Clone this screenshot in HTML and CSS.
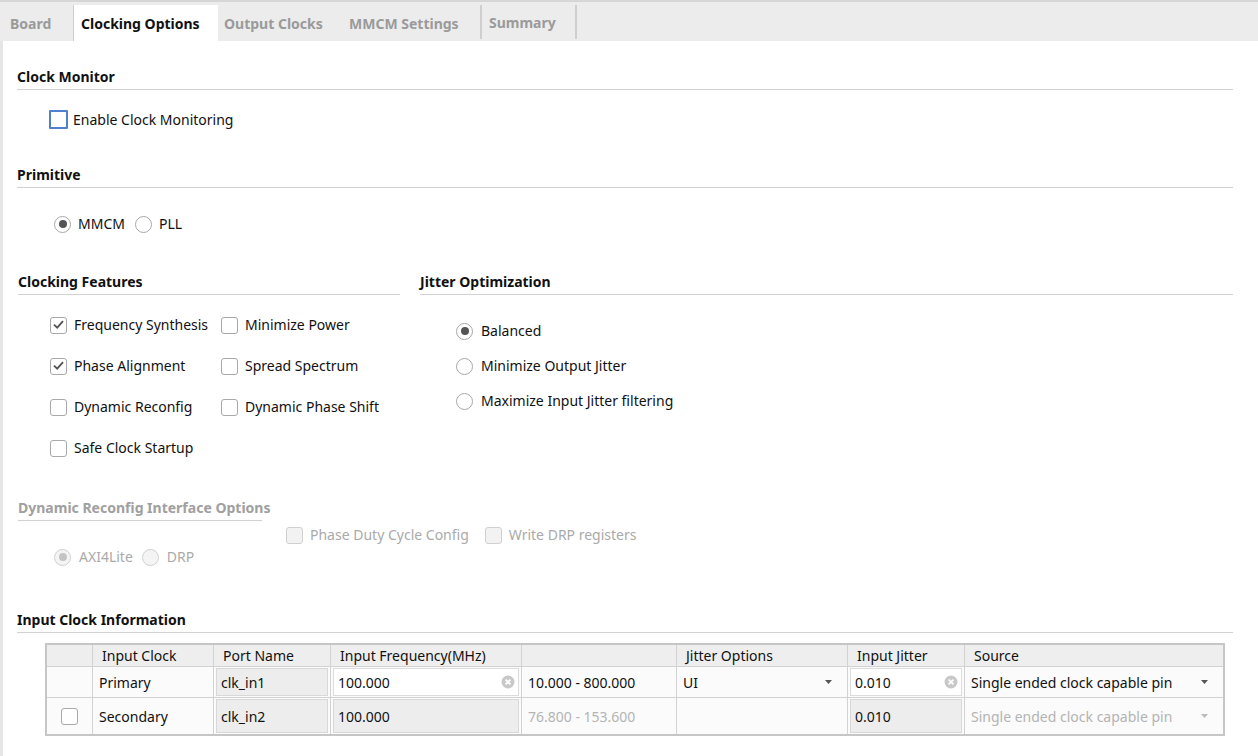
FILE: index.html
```html
<!DOCTYPE html>
<html>
<head>
<meta charset="utf-8">
<link rel="stylesheet" href="styles.css">
</head>
<body>
<div class="app">
  <div class="tabbar">
    <div class="tab tab-board">Board</div>
    <div class="tab tab-active">Clocking Options</div>
    <div class="tab tab-output">Output Clocks</div>
    <div class="tab tab-mmcm">MMCM Settings</div>
    <div class="tab tab-summary">Summary</div>
  </div>
  <div class="content">
    <div class="section-title mt-cm">Clock Monitor</div>
    <div class="opt enable-row"><span class="cb cb-focus"></span><span>Enable Clock Monitoring</span></div>

    <div class="section-title mt-prim">Primitive</div>
    <div class="radio-row prim-row">
      <div class="opt"><span class="rb rb-on"></span><span>MMCM</span></div>
      <div class="opt"><span class="rb"></span><span>PLL</span></div>
    </div>

    <div class="two-col">
      <div class="col-left">
        <div class="section-title">Clocking Features</div>
        <div class="feat-grid">
          <div class="opt"><span class="cb cb-checked"><svg viewBox="0 0 17 17" width="17" height="17"><path d="M4 8.6 L7.2 11.6 L13 5.2" fill="none" stroke="#555" stroke-width="1.9"/></svg></span><span>Frequency Synthesis</span></div>
          <div class="opt"><span class="cb"></span><span>Minimize Power</span></div>
          <div class="opt"><span class="cb cb-checked"><svg viewBox="0 0 17 17" width="17" height="17"><path d="M4 8.6 L7.2 11.6 L13 5.2" fill="none" stroke="#555" stroke-width="1.9"/></svg></span><span>Phase Alignment</span></div>
          <div class="opt"><span class="cb"></span><span>Spread Spectrum</span></div>
          <div class="opt"><span class="cb"></span><span>Dynamic Reconfig</span></div>
          <div class="opt"><span class="cb"></span><span>Dynamic Phase Shift</span></div>
          <div class="opt"><span class="cb"></span><span>Safe Clock Startup</span></div>
        </div>
      </div>
      <div class="col-right">
        <div class="section-title">Jitter Optimization</div>
        <div class="jitter-list">
          <div class="opt"><span class="rb rb-on"></span><span>Balanced</span></div>
          <div class="opt"><span class="rb"></span><span>Minimize Output Jitter</span></div>
          <div class="opt"><span class="rb"></span><span>Maximize Input Jitter filtering</span></div>
        </div>
      </div>
    </div>

    <div class="drp-row">
      <div class="drp-left">
        <div class="section-title disabled-title">Dynamic Reconfig Interface Options</div>
        <div class="radio-row drp-radios">
          <div class="opt dis"><span class="rb rb-on rb-dis"></span><span>AXI4Lite</span></div>
          <div class="opt dis"><span class="rb rb-dis"></span><span>DRP</span></div>
        </div>
      </div>
      <div class="drp-right">
        <div class="opt dis"><span class="cb cb-dis"></span><span>Phase Duty Cycle Config</span></div>
        <div class="opt dis"><span class="cb cb-dis"></span><span>Write DRP registers</span></div>
      </div>
    </div>

    <div class="section-title mt-ici">Input Clock Information</div>
    <div class="clk-table">
      <div class="c h"></div>
      <div class="c h">Input Clock</div>
      <div class="c h">Port Name</div>
      <div class="c h">Input Frequency(MHz)</div>
      <div class="c h"></div>
      <div class="c h">Jitter Options</div>
      <div class="c h">Input Jitter</div>
      <div class="c h last">Source</div>

      <div class="c r1"></div>
      <div class="c r1 txt">Primary</div>
      <div class="c r1 fc"><div class="field ro">clk_in1</div></div>
      <div class="c r1 fc"><div class="field wr"><span>100.000</span><svg class="clr" viewBox="0 0 14 14" width="14" height="14"><circle cx="7" cy="7" r="6.5" fill="#c8c8c8"/><path d="M4.6 4.6 L9.4 9.4 M9.4 4.6 L4.6 9.4" stroke="#fff" stroke-width="1.8"/></svg></div></div>
      <div class="c r1 txt">10.000 - 800.000</div>
      <div class="c r1 txt sel"><span>UI</span><svg class="arr" viewBox="0 0 7 4" width="7" height="4"><path d="M0 0 L7 0 L3.5 4 Z" fill="#555"/></svg></div>
      <div class="c r1 fc"><div class="field wr"><span>0.010</span><svg class="clr" viewBox="0 0 14 14" width="14" height="14"><circle cx="7" cy="7" r="6.5" fill="#c8c8c8"/><path d="M4.6 4.6 L9.4 9.4 M9.4 4.6 L4.6 9.4" stroke="#fff" stroke-width="1.8"/></svg></div></div>
      <div class="c r1 txt sel last"><span>Single ended clock capable pin</span><svg class="arr" viewBox="0 0 7 4" width="7" height="4"><path d="M0 0 L7 0 L3.5 4 Z" fill="#555"/></svg></div>

      <div class="c r2 cbcell"><span class="cb"></span></div>
      <div class="c r2 txt">Secondary</div>
      <div class="c r2 fc"><div class="field ro">clk_in2</div></div>
      <div class="c r2 fc"><div class="field ro">100.000</div></div>
      <div class="c r2 txt dim">76.800 - 153.600</div>
      <div class="c r2"></div>
      <div class="c r2 fc"><div class="field ro">0.010</div></div>
      <div class="c r2 txt sel dim last"><span>Single ended clock capable pin</span><svg class="arr" viewBox="0 0 7 4" width="7" height="4"><path d="M0 0 L7 0 L3.5 4 Z" fill="#bbb"/></svg></div>
    </div>
  </div>
</div>
</body>
</html>
```

FILE: styles.css
```css
* { box-sizing: border-box; }
html, body { margin: 0; padding: 0; background: #fff; }
body {
  font-family: "Noto Sans", "Open Sans", "DejaVu Sans", sans-serif;
  font-size: 14px;
  color: #111;
  width: 1258px;
  height: 756px;
  overflow: hidden;
}
.app { height: 756px; display: flex; flex-direction: column; }

/* tabs */
.tabbar {
  height: 41px;
  background: #ececec;
  border-top: 2px solid #d6d6d6;
  display: flex;
  align-items: flex-end;
}
.tab {
  height: 36px;
  display: flex;
  align-items: center;
  font-weight: bold;
  color: #9a9a9a;
  font-size: 14px;
  white-space: nowrap;
}
.tab-board { width: 73px; padding-left: 10px; }
.tab-active { width: 145px; padding-left: 7px; background: #fff; color: #111; border-left: 1px solid #cfcfcf; }
.tab-output { width: 125px; padding-left: 6px; }
.tab-mmcm { width: 137px; padding-left: 6px; }
.tab-summary {
  width: 97px; padding-left: 7px; padding-top: 1px;
  height: 34px; align-self: flex-start; margin-top: 3px;
  border-left: 2px solid #cfcfcf; border-right: 2px solid #cfcfcf;
}

/* content */
.content {
  flex: 1;
  border-left: 3px solid #e6e6e6;
  padding: 0 25px 0 14px;
  display: flex;
  flex-direction: column;
}
.section-title {
  font-weight: bold;
  line-height: 18px;
  padding-bottom: 3px;
  border-bottom: 1px solid #d2d2d2;
  white-space: nowrap;
}
.mt-cm { margin-top: 27px; }
.mt-prim { margin-top: 37px; }
.mt-ici { margin-top: 45px; }

.opt {
  display: flex;
  align-items: center;
  gap: 7px;
  line-height: 18px;
  height: 18px;
  white-space: nowrap;
}
.dis { color: #aaa; }

.cb {
  width: 17px; height: 17px;
  border: 1.5px solid #a8a8a8;
  border-radius: 3px;
  background: #fff;
  flex: none;
  display: flex;
  align-items: center;
  justify-content: center;
  position: relative;
}
.cb svg { position: absolute; left: -1.5px; top: -1.5px; }
.cb-focus { width: 19px; height: 19px; border: 2px solid #4f7fcf; border-radius: 1px; }
.cb-dis { border-color: #d0d0d0; background: #f2f2f2; }

.rb {
  width: 17px; height: 17px;
  border: 1.5px solid #a8a8a8;
  border-radius: 50%;
  background: #fff;
  flex: none;
  display: flex;
  align-items: center;
  justify-content: center;
}
.rb-on::after {
  content: "";
  width: 8px; height: 8px;
  border-radius: 50%;
  background: #555;
}
.rb-dis { border-color: #d0d0d0; background: #f4f4f4; }
.rb-dis.rb-on::after { background: #c4c4c4; }

.enable-row { margin-top: 20px; margin-left: 32px; gap: 5px; height: 19px; }

.radio-row { display: flex; gap: 10px; }
.prim-row { margin-top: 27px; margin-left: 37px; }

.two-col { display: flex; gap: 20px; margin-top: 40px; }
.col-left { width: 383px; flex: none; padding-left: 1px; }
.col-right { flex: 1; }
.feat-grid {
  display: grid;
  grid-template-columns: 171px auto;
  row-gap: 23px;
  margin-top: 21px;
  margin-left: 32px;
}
.jitter-list {
  display: flex;
  flex-direction: column;
  gap: 17px;
  margin-top: 27px;
  margin-left: 36px;
}
.jitter-list .opt { gap: 8px; }

.drp-row { display: flex; margin-top: 42px; }
.drp-left { width: 245px; flex: none; padding-left: 1px; }
.disabled-title { color: #a0a0a0; }
.drp-radios { margin-top: 27px; margin-left: 36px; gap: 9px; }
.drp-radios .opt { gap: 8px; }
.drp-right { display: flex; gap: 16px; margin-left: 24px; margin-top: 27px; }

/* table */
.clk-table {
  margin-top: 10px;
  margin-left: 28px;
  width: 1180px;
  border: 2px solid #c6c6c6;
  display: grid;
  grid-template-columns: 46px 121px 117px 191px 155px 171px 117px 1fr;
  grid-template-rows: 22px 31px 36px;
  background: #fbfbfb;
}
.c {
  border-right: 1px solid #d2d2d2;
  border-bottom: 1px solid #d2d2d2;
  display: flex;
  align-items: center;
  padding-left: 9px;
  white-space: nowrap;
  overflow: hidden;
}
.c.last { border-right: none; }
.c.r2 { border-bottom: none; }
.h { background: #eeeeee; color: #111; }
.txt { padding-left: 6px; }
.dim { color: #b4b4b4; }
.fc { padding: 1px 2px; align-items: stretch; }
.field {
  flex: 1;
  display: flex;
  align-items: center;
  padding-left: 4px;
  border: 1px solid #d8d8d8;
}
.field.ro { background: #ededed; }
.field.wr { background: #fff; justify-content: space-between; padding-right: 3px; border-color: #dcdcdc; }
.sel { justify-content: space-between; padding-right: 15px; }
.cbcell { justify-content: center; padding-left: 0; }
.clr { flex: none; }
.arr { flex: none; }
```
